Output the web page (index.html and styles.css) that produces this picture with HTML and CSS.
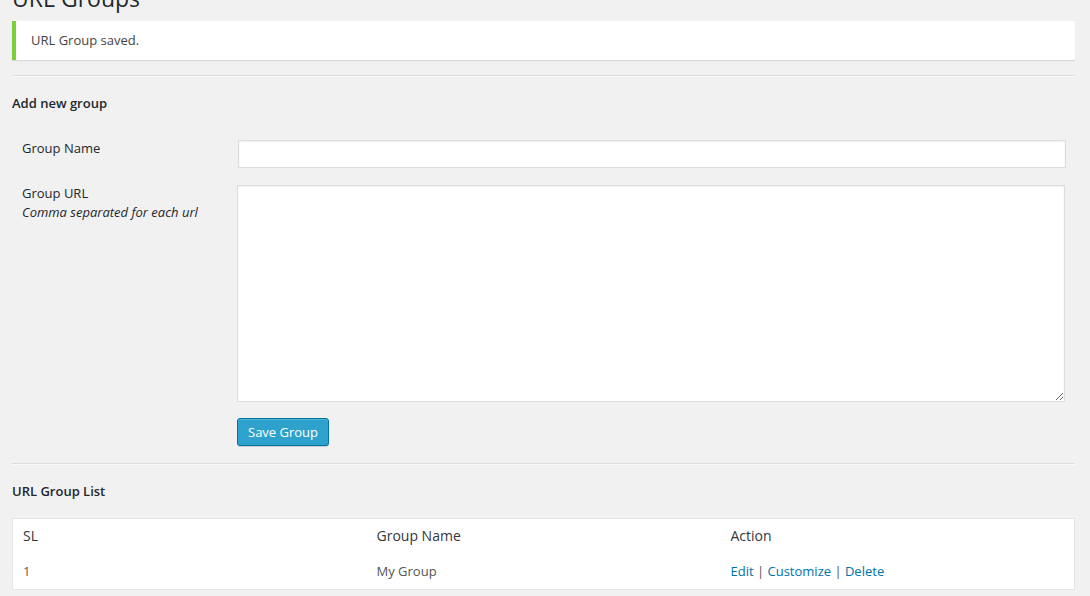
FILE: index.html
```html
<!DOCTYPE html>
<html lang="en">
<head>
<meta charset="utf-8">
<title>URL Groups</title>
<link rel="stylesheet" href="styles.css">
</head>
<body>
<div class="wrap">
  <h1 class="page-title">URL Groups</h1>
  <div class="notice"><p>URL Group saved.</p></div>
  <hr class="sep">
  <h3 class="section-title">Add new group</h3>
  <form class="group-form">
    <div class="form-row">
      <label class="form-label" for="gname">Group Name</label>
      <input class="text-input" id="gname" type="text">
    </div>
    <div class="form-row">
      <div class="form-label">
        <label for="gurl">Group URL</label>
        <div class="hint">Comma separated for each url</div>
      </div>
      <textarea class="text-area" id="gurl"></textarea>
    </div>
    <div class="form-row">
      <div></div>
      <div><button type="button" class="btn-primary">Save Group</button></div>
    </div>
  </form>
  <hr class="sep sep-lower">
  <h3 class="section-title list-title">URL Group List</h3>
  <table class="list-table">
    <thead>
      <tr><th>SL</th><th>Group Name</th><th>Action</th></tr>
    </thead>
    <tbody>
      <tr>
        <td class="sl">1</td>
        <td>My Group</td>
        <td><a href="#">Edit</a> | <a href="#">Customize</a> | <a href="#">Delete</a></td>
      </tr>
    </tbody>
  </table>
</div>
</body>
</html>
```

FILE: styles.css
```css
html, body {
  margin: 0;
  padding: 0;
  background: #f1f1f1;
  overflow: hidden;
}
body {
  font-family: "Open Sans", "Noto Sans", sans-serif;
  font-size: 13px;
  line-height: 19px;
  color: #444;
}
.wrap {
  padding: 0 15px 0 12px;
}
.page-title {
  margin: -16px 0 0;
  font-size: 23px;
  font-weight: 400;
  line-height: 29px;
  color: #23282d;
}
.notice {
  margin-top: 8px;
  background: #fff;
  border-left: 4px solid #7ad03a;
  box-shadow: 0 1px 1px rgba(0,0,0,0.1);
  padding: 10px 15px;
}
.notice p {
  margin: 0;
  line-height: 19px;
  color: #444;
}
.sep {
  margin: 15px 0 0;
  height: 0;
  border: 0;
  border-top: 1px solid #dcdcdc;
  border-bottom: 1px solid #fafafa;
}
.section-title {
  margin: 17px 0 0;
  font-size: 13px;
  font-weight: 600;
  line-height: 19px;
  color: #23282d;
}
.group-form {
  margin-top: 26px;
}
.form-row {
  display: grid;
  grid-template-columns: 226px 1fr;
  align-items: start;
  margin-bottom: 16px;
}
.form-row:last-child {
  margin-bottom: 0;
}
.form-label {
  padding-left: 10px;
  color: #23282d;
  line-height: 19px;
}
.hint {
  font-style: italic;
  color: #23282d;
}
.text-input {
  display: block;
  box-sizing: border-box;
  margin: 1px 9px 0 0;
  height: 28px;
  width: calc(100% - 9px);
  border: 1px solid #ddd;
  box-shadow: inset 0 1px 2px rgba(0,0,0,0.07);
  background: #fff;
  font: inherit;
  padding: 3px 5px;
}
.text-area {
  display: block;
  box-sizing: border-box;
  margin: 1px 0 0 -1px;
  height: 217px;
  width: calc(100% - 9px);
  border: 1px solid #ddd;
  box-shadow: inset 0 1px 2px rgba(0,0,0,0.07);
  background: #fff;
  font: inherit;
  padding: 2px 6px;
  resize: both;
}
.btn-primary {
  display: inline-block;
  margin-left: -1px;
  box-sizing: border-box;
  height: 28px;
  padding: 0 10px 1px;
  font-family: "Open Sans", "Noto Sans", sans-serif;
  font-size: 13px;
  line-height: 26px;
  color: #fff;
  background: #2ea2cc;
  border: 1px solid #0074a2;
  border-radius: 3px;
  box-shadow: inset 0 1px 0 rgba(120,200,230,0.5), 0 1px 0 rgba(0,0,0,0.15);
  cursor: pointer;
}
.sep-lower {
  margin-top: 17px;
}
.list-title {
  margin-top: 17px;
}
.list-table {
  margin-top: 17px;
  width: 100%;
  table-layout: fixed;
  border-collapse: collapse;
  background: #fff;
  border: 1px solid #e5e5e5;
  box-shadow: 0 1px 1px rgba(0,0,0,0.04);
}
.list-table th {
  text-align: left;
  font-weight: 400;
  font-size: 14px;
  line-height: 19px;
  color: #32373c;
  padding: 7px 10px 9px;
}
.list-table td {
  font-size: 13px;
  line-height: 19px;
  color: #555;
  padding: 8px 10px 8px;
}
.list-table td.sl {
  color: #6b5a45;
}
.list-table a {
  color: #0073aa;
  text-decoration: none;
}
```
